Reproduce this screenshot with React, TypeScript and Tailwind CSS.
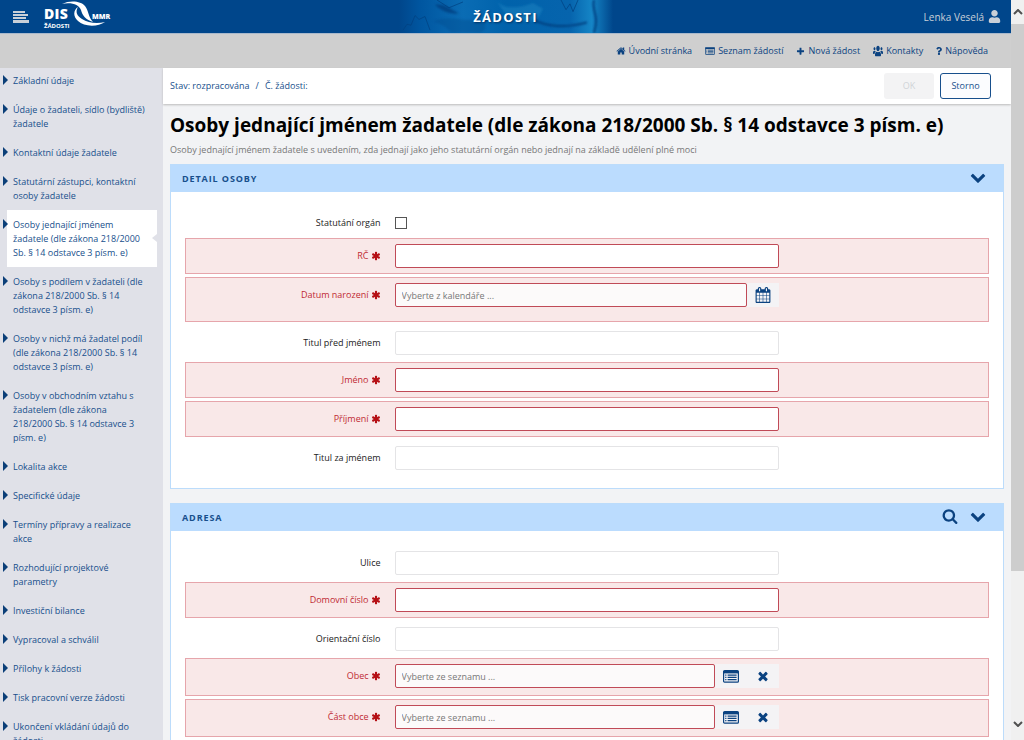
import React, { useState } from 'react';
import { FaQuestion, FaUser, FaUsers } from 'react-icons/fa';

interface IconProps {
  className?: string;
}

interface Field {
  id: string;
  label: string;
  required?: boolean;
  kind?: 'text' | 'date' | 'list';
  height: string;
}

const paths = {
  chevron:
    'M1683 808l-742 741q-19 19-45 19t-45-19l-742-741q-19-19-19-45.5t19-45.5l166-165q19-19 45-19t45 19l531 531 531-531q19-19 45-19t45 19l166 165q19 19 19 45.5t-19 45.5z',
  asterisk:
    'M1546 1050q46 26 59.5 77.5t-12.5 97.5l-64 110q-26 46-77.5 59.5t-97.5-12.5l-266-153v307q0 52-38 90t-90 38h-128q-52 0-90-38t-38-90v-307l-266 153q-46 26-97.5 12.5t-77.5-59.5l-64-110q-26-46-12.5-97.5t59.5-77.5l266-154-266-154q-46-26-59.5-77.5t12.5-97.5l64-110q26-46 77.5-59.5t97.5 12.5l266 153v-307q0-52 38-90t90-38h128q52 0 90 38t38 90v307l266-153q46-26 97.5-12.5t77.5 59.5l64 110q26 46 12.5 97.5t-59.5 77.5l-266 154z',
  times:
    'M1490 1322q0 40-28 68l-136 136q-28 28-68 28t-68-28l-294-294-294 294q-28 28-68 28t-68-28l-136-136q-28-28-28-68t28-68l294-294-294-294q-28-28-28-68t28-68l136-136q28-28 68-28t68 28l294 294 294-294q28-28 68-28t68 28l136 136q28 28 28 68t-28 68l-294 294 294 294q28 28 28 68z',
  plus: 'M1600 736v192q0 40-28 68t-68 28h-416v416q0 40-28 68t-68 28h-192q-40 0-68-28t-28-68v-416h-416q-40 0-68-28t-28-68v-192q0-40 28-68t68-28h416v-416q0-40 28-68t68-28h192q40 0 68 28t28 68v416h416q40 0 68 28t28 68z',
  home: 'M1472 992v480q0 26-19 45t-45 19h-384v-384h-256v384h-384q-26 0-45-19t-19-45v-480q0-1 .5-3t.5-3l575-474 575 474q1 2 1 6zm223-69l-62 74q-8 9-21 11h-3q-13 0-21-7l-692-577-692 577q-12 8-24 7-13-2-21-11l-62-74q-8-10-7-23.5t11-21.5l719-599q32-26 76-26t76 26l244 204v-195q0-14 9-23t23-9h192q14 0 23 9t9 23v408l219 182q10 8 11 21.5t-7 23.5z',
  search:
    'M1216 832q0-185-131.5-316.5t-316.5-131.5-316.5 131.5-131.5 316.5 131.5 316.5 316.5 131.5 316.5-131.5 131.5-316.5zm512 832q0 52-38 90t-90 38q-54 0-90-38l-343-342q-179 124-399 124-143 0-273.5-55.5t-225-150-150-225-55.5-273.5 55.5-273.5 150-225 225-150 273.5-55.5 273.5 55.5 225 150 150 225 55.5 273.5q0 220-124 399l343 343q37 37 37 90z',
  calendar:
    'M192 1664h288v-288h-288v288zm352 0h320v-288h-320v288zm-352-352h288v-320h-288v320zm352 0h320v-320h-320v320zm-352-384h288v-288h-288v288zm736 736h320v-288h-320v288zm-384-736h320v-288h-320v288zm768 736h288v-288h-288v288zm-384-352h320v-320h-320v320zm-352-864v-288q0-13-9.5-22.5t-22.5-9.5h-64q-13 0-22.5 9.5t-9.5 22.5v288q0 13 9.5 22.5t22.5 9.5h64q13 0 22.5-9.5t9.5-22.5zm736 864h288v-320h-288v320zm-384-384h320v-288h-320v288zm384 0h288v-288h-288v288zm32-480v-288q0-13-9.5-22.5t-22.5-9.5h-64q-13 0-22.5 9.5t-9.5 22.5v288q0 13 9.5 22.5t22.5 9.5h64q13 0 22.5-9.5t9.5-22.5zm384-64v1280q0 52-38 90t-90 38h-1408q-52 0-90-38t-38-90v-1280q0-52 38-90t90-38h128v-96q0-66 47-113t113-47h64q66 0 113 47t47 113v96h384v-96q0-66 47-113t113-47h64q66 0 113 47t47 113v96h128q52 0 90 38t38 90z',
};

const Icon: React.FC<IconProps & { name: keyof typeof paths }> = ({ name, className }) => (
  <svg viewBox="0 0 1792 1792" fill="currentColor" aria-hidden="true" className={className}>
    <path d={paths[name]} />
  </svg>
);

const ListIcon: React.FC<IconProps> = ({ className }) => (
  <svg viewBox="0 0 16 13" fill="none" aria-hidden="true" className={className}>
    <rect x="0.6" y="0.6" width="14.8" height="11.6" rx="1" stroke="currentColor" strokeWidth="1.2" />
    <path d="M0.5 1h15v2.4h-15z" fill="currentColor" />
    <path d="M2.2 5.2h1.2M2.2 7.4h1.2M2.2 9.6h1.2M4.6 5.2h9M4.6 7.4h9M4.6 9.6h9" stroke="currentColor" strokeWidth="1.2" />
  </svg>
);

const Logo = () => (
  <div className="ml-[15px] flex h-full items-start text-white">
    <div className="flex w-[18px] flex-col pt-1.5">
      <span className="text-[14px] font-extrabold leading-[15px] tracking-wide">DIS</span>
      <span className="mt-0.5 text-[6px] font-bold leading-[6px]">ŽÁDOSTI</span>
    </div>
    <svg viewBox="62 0 44 28" className="h-7 w-11" fill="currentColor" aria-hidden="true">
      <path d="M62 4C70 0 81 1 85 6c4 5 3 11 8 16-7-2-11-7-12-12C79 5 72 2 62 4z" />
      <path d="M78 7c-3 5-1 9 4 12 6 4 15 5 23 3-7 5-21 5-27-1-5-4-5-11 0-14z" />
    </svg>
    <span className="-ml-[14px] pt-3 text-[7px] font-extrabold leading-[10px]">MMR</span>
  </div>
);

const BannerArt = () => (
  <svg viewBox="0 0 214 34" className="absolute inset-0 h-full w-full" preserveAspectRatio="none" aria-hidden="true">
    <defs>
      <linearGradient id="banner">
        <stop offset="0" stopColor="#00468b" />
        <stop offset="0.1" stopColor="#0056a0" />
        <stop offset="0.3" stopColor="#0a6cb4" />
        <stop offset="0.5" stopColor="#0062ab" />
        <stop offset="0.8" stopColor="#0664ad" />
        <stop offset="0.9" stopColor="#1585c6" />
        <stop offset="1" stopColor="#00468b" />
      </linearGradient>
      <filter id="soft">
        <feGaussianBlur stdDeviation="1" />
      </filter>
    </defs>
    <path d="M0 0h214v34H0z" fill="url(#banner)" />
    <g filter="url(#soft)">
      <path d="M36 5c8-2 14 3 24 9-10 1-18-3-24-9z" fill="#003f80" opacity="0.8" />
      <path d="M34 22c18-8 30 2 46-3 8 3 9 12 1 15H52c-5-7-10-9-18-12z" fill="#00498d" opacity="0.4" />
      <path d="M98 0c4 10 22 9 36 3l10 6c-4 8-6 14-16 13-12-1-24-6-30-22z" fill="#2a91cb" opacity="0.35" />
      <path d="M134 20c14 8 34 9 54 3M195 0c-3 12 6 14 0 34" fill="none" stroke="#003f80" strokeWidth="2" />
    </g>
    <path d="M4 31l4-6 4 1 4-10 4 4 6-3 5 14M38 0l12 8 14-6M162 0l5 10 4-6 3 8 5-12" fill="none" stroke="#00407f" strokeWidth="1" opacity="0.7" />
  </svg>
);

const menuItems = [
  'Základní údaje',
  'Údaje o žadateli, sídlo (bydliště) žadatele',
  'Kontaktní údaje žadatele',
  'Statutární zástupci, kontaktní osoby žadatele',
  'Osoby jednající jménem žadatele (dle zákona 218/2000 Sb. § 14 odstavce 3 písm. e)',
  'Osoby s podílem v žadateli (dle zákona 218/2000 Sb. § 14 odstavce 3 písm. e)',
  'Osoby v nichž má žadatel podíl (dle zákona 218/2000 Sb. § 14 odstavce 3 písm. e)',
  'Osoby v obchodním vztahu s žadatelem (dle zákona 218/2000 Sb. § 14 odstavce 3 písm. e)',
  'Lokalita akce',
  'Specifické údaje',
  'Termíny přípravy a realizace akce',
  'Rozhodující projektové parametry',
  'Investiční bilance',
  'Vypracoval a schválil',
  'Přílohy k žádosti',
  'Tisk pracovní verze žádosti',
  'Ukončení vkládání údajů do žádosti',
];

const topLinks = [
  { label: 'Úvodní stránka', icon: <Icon name="home" className="h-[10px] w-[10px]" /> },
  { label: 'Seznam žádostí', icon: <ListIcon className="h-2 w-[10px]" /> },
  { label: 'Nová žádost', icon: <Icon name="plus" className="h-[9px] w-[9px]" /> },
  { label: 'Kontakty', icon: <FaUsers className="h-3 w-[10px]" preserveAspectRatio="none" /> },
  { label: 'Nápověda', icon: <FaQuestion className="h-2 w-[6px]" /> },
];

const personFields: Field[] = [
  { id: 'rc', label: 'RČ', required: true, height: 'h-9' },
  { id: 'datum-narozeni', label: 'Datum narození', required: true, kind: 'date', height: 'h-[45px]' },
  { id: 'titul-pred', label: 'Titul před jménem', height: 'h-[34px]' },
  { id: 'jmeno', label: 'Jméno', required: true, height: 'h-9' },
  { id: 'prijmeni', label: 'Příjmení', required: true, height: 'h-9' },
  { id: 'titul-za', label: 'Titul za jménem', height: 'h-[34px]' },
];

const addressFields: Field[] = [
  { id: 'ulice', label: 'Ulice', height: 'h-[34px]' },
  { id: 'domovni-cislo', label: 'Domovní číslo', required: true, height: 'h-9' },
  { id: 'orientacni-cislo', label: 'Orientační číslo', height: 'h-[34px]' },
  { id: 'obec', label: 'Obec', required: true, kind: 'list', height: 'h-[38px]' },
  { id: 'cast-obce', label: 'Část obce', required: true, kind: 'list', height: 'h-[38px]' },
];

const FieldRow: React.FC<{ field: Field }> = ({ field }) => {
  const { id, label, required, kind = 'text', height } = field;
  const placeholder =
    kind === 'date' ? 'Vyberte z kalendáře ...' : kind === 'list' ? 'Vyberte ze seznamu ...' : undefined;

  return (
    <div
      className={`flex items-start border pt-[5px] ${height} ${
        required ? 'border-[#e6a5ab] bg-[#f9e8e8]' : 'border-transparent'
      }`}
    >
      <label
        htmlFor={id}
        className={`flex h-6 w-[26%] shrink-0 items-center justify-end gap-0.5 pr-[14px] ${
          required ? 'text-[#c02a33]' : 'text-[#222]'
        }`}
      >
        {label}
        {required && <Icon name="asterisk" className="h-[10px] w-[10px] text-[#b50f14]" />}
      </label>
      <div className="flex w-[48%]">
        <input
          id={id}
          type="text"
          placeholder={placeholder}
          className={`h-6 min-w-0 flex-1 rounded-[2px] border px-1.5 placeholder:text-[#777] ${
            required ? 'border-[#c04a57]' : 'border-[#e4e4e6]'
          } ${kind === 'text' ? 'bg-white' : 'bg-[#fcfafa]'}`}
        />
        {kind === 'date' && (
          <button type="button" aria-label="Kalendář" className="flex h-6 w-8 items-center justify-center bg-[#f4f3f5] text-[#0b4280]">
            <Icon name="calendar" className="h-4 w-4" />
          </button>
        )}
        {kind === 'list' && (
          <>
            <button type="button" aria-label="Seznam" className="flex h-6 w-8 items-center justify-center bg-[#f4f3f5] text-[#0b4280]">
              <ListIcon className="h-[13px] w-4" />
            </button>
            <button type="button" aria-label="Vymazat" className="flex h-6 w-8 items-center justify-center bg-[#f4f3f5] text-[#0b4280]">
              <Icon name="times" className="h-[14px] w-[14px]" />
            </button>
          </>
        )}
      </div>
    </div>
  );
};

const Panel: React.FC<{ title: string; searchable?: boolean; children: React.ReactNode }> = ({
  title,
  searchable,
  children,
}) => (
  <section className="border border-[#bcdcfb] bg-white">
    <div className="flex h-[27px] items-center bg-[#bbdcfe] pl-[11px] pr-[17px] text-[#174f8c]">
      <h2 className="flex-1 text-[9px] font-bold tracking-widest">{title}</h2>
      <div className="flex items-center gap-3 pb-[3px] text-[#0b4280]">
        {searchable && (
          <button type="button" aria-label="Hledat">
            <Icon name="search" className="h-4 w-4" />
          </button>
        )}
        <button type="button" aria-label="Sbalit">
          <Icon name="chevron" className="h-4 w-4" />
        </button>
      </div>
    </div>
    <div className="flex flex-col gap-[3px] p-[14px]">{children}</div>
  </section>
);

export default function App() {
  const [active, setActive] = useState(4);

  return (
    <div className="flex h-screen overflow-hidden bg-[#f2f3f5] font-['Open_Sans','Noto_Sans',sans-serif] text-[9px] leading-[14px] text-[#174f8c]">
      <div className="flex min-w-0 flex-1 flex-col">
        <header className="grid h-[34px] shrink-0 grid-cols-[1fr_214px_1fr] border-b border-[#a9b9cc] bg-[#00468b]">
          <div className="flex h-[33px] items-center pl-[13px]">
            <button type="button" aria-label="Menu" className="text-[#c9d0d8]">
              <svg viewBox="0 0 16 12" className="h-3 w-4" fill="currentColor" aria-hidden="true">
                <path d="M0 0h12v2H0zM0 3h15v2H0zM0 6h13v2H0zM0 9h16v3H0z" />
              </svg>
            </button>
            <Logo />
          </div>
          <div className="relative">
            <BannerArt />
            <span className="absolute inset-0 flex items-center justify-center text-[13px] font-bold tracking-widest text-white [text-shadow:1px_1px_2px_#003060]">
              ŽÁDOSTI
            </span>
          </div>
          <div className="flex items-center justify-end gap-1 pr-[10px] text-[#c9d0d8]">
            <span className="text-[10px] font-medium">Lenka Veselá</span>
            <FaUser className="h-[13px] w-[13px]" />
          </div>
        </header>

        <nav className="flex h-[34px] shrink-0 items-center justify-end gap-[13px] bg-[#cfcfcf] pr-[23px] text-[#0b4280]">
          {topLinks.map((link) => (
            <a key={link.label} href="#" className="flex items-center gap-[3px]">
              {link.icon}
              {link.label}
            </a>
          ))}
        </nav>

        <div className="flex min-h-0 flex-1">
          <aside className="w-[163px] shrink-0 bg-[#e0e1e8]">
            <ul className="-mt-0.5">
              {menuItems.map((item, i) => (
                <li key={item} className="flex pl-[3px]">
                  <span className="z-10 mt-[9px] h-0 w-0 border-y-[5px] border-l-[5px] border-y-transparent border-l-[#0b3f78]" />
                  <a
                    href="#"
                    onClick={(e) => {
                      e.preventDefault();
                      setActive(i);
                    }}
                    className={`relative -ml-px mr-1.5 flex-1 pb-[7px] pl-1.5 pr-[11px] pt-2 ${i === active ? 'bg-white' : ''}`}
                  >
                    {item}
                    {i === active && (
                      <span className="absolute right-0 top-6 border-y-4 border-r-[5px] border-y-transparent border-r-[#e0e1e8]" />
                    )}
                  </a>
                </li>
              ))}
            </ul>
          </aside>

          <main className="min-w-0 flex-1">
            <div className="flex h-9 items-center justify-between bg-white pl-[7px] pr-5 shadow-[0_1px_2px_#bbb]">
              <p className="flex gap-1.5">
                <span>Stav: rozpracována</span>
                <span>/</span>
                <span>Č. žádosti:</span>
              </p>
              <div className="flex gap-1.5">
                <button type="button" disabled className="h-[26px] w-[50px] rounded-[3px] bg-[#f3f3f4] text-[#d0d3d8]">
                  OK
                </button>
                <button type="button" className="h-[26px] w-[51px] rounded-[3px] border border-[#174f8c] bg-[#fbfcfe]">
                  Storno
                </button>
              </div>
            </div>

            <div className="pl-[7px] pr-[7px] pt-[9px]">
              <h1 className="text-[19px] font-bold leading-6 text-black">
                Osoby jednající jménem žadatele (dle zákona 218/2000 Sb. § 14 odstavce 3 písm. e)
              </h1>
              <p className="mb-[7px] mt-1.5 text-[#777]">
                Osoby jednající jménem žadatele s uvedením, zda jednají jako jeho statutární orgán nebo jednají na
                základě udělení plné moci
              </p>
              <div className="flex flex-col gap-[14px]">
                <Panel title="DETAIL OSOBY">
                  <div className="flex h-[29px] items-center border border-transparent pt-1">
                    <label htmlFor="statutarni-organ" className="w-[26%] pr-[14px] text-right text-[#222]">
                      Statutání orgán
                    </label>
                    <input
                      id="statutarni-organ"
                      type="checkbox"
                      className="h-3 w-3 appearance-none border border-[#555] bg-white checked:bg-[#174f8c]"
                    />
                  </div>
                  {personFields.map((field) => (
                    <FieldRow key={field.id} field={field} />
                  ))}
                </Panel>
                <Panel title="ADRESA" searchable>
                  {addressFields.map((field) => (
                    <FieldRow key={field.id} field={field} />
                  ))}
                </Panel>
              </div>
            </div>
          </main>
        </div>
      </div>

      {/* scroll track */}
      <div className="flex w-[13px] shrink-0 flex-col bg-[#f0f0f0] text-[#505050]" aria-hidden="true">
        <div className="flex h-6 items-center justify-center">
          <svg viewBox="0 0 10 6" className="h-1.5 w-[10px]" fill="none" stroke="currentColor" strokeWidth="2">
            <path d="M1 5l4-4 4 4" />
          </svg>
        </div>
        <div className="flex-1">
          <div className="h-4/5 bg-[#cdcdcd]" />
        </div>
        <div className="flex h-8 items-center justify-center">
          <svg viewBox="0 0 10 6" className="h-1.5 w-[10px]" fill="none" stroke="currentColor" strokeWidth="2">
            <path d="M1 1l4 4 4-4" />
          </svg>
        </div>
      </div>
    </div>
  );
}
